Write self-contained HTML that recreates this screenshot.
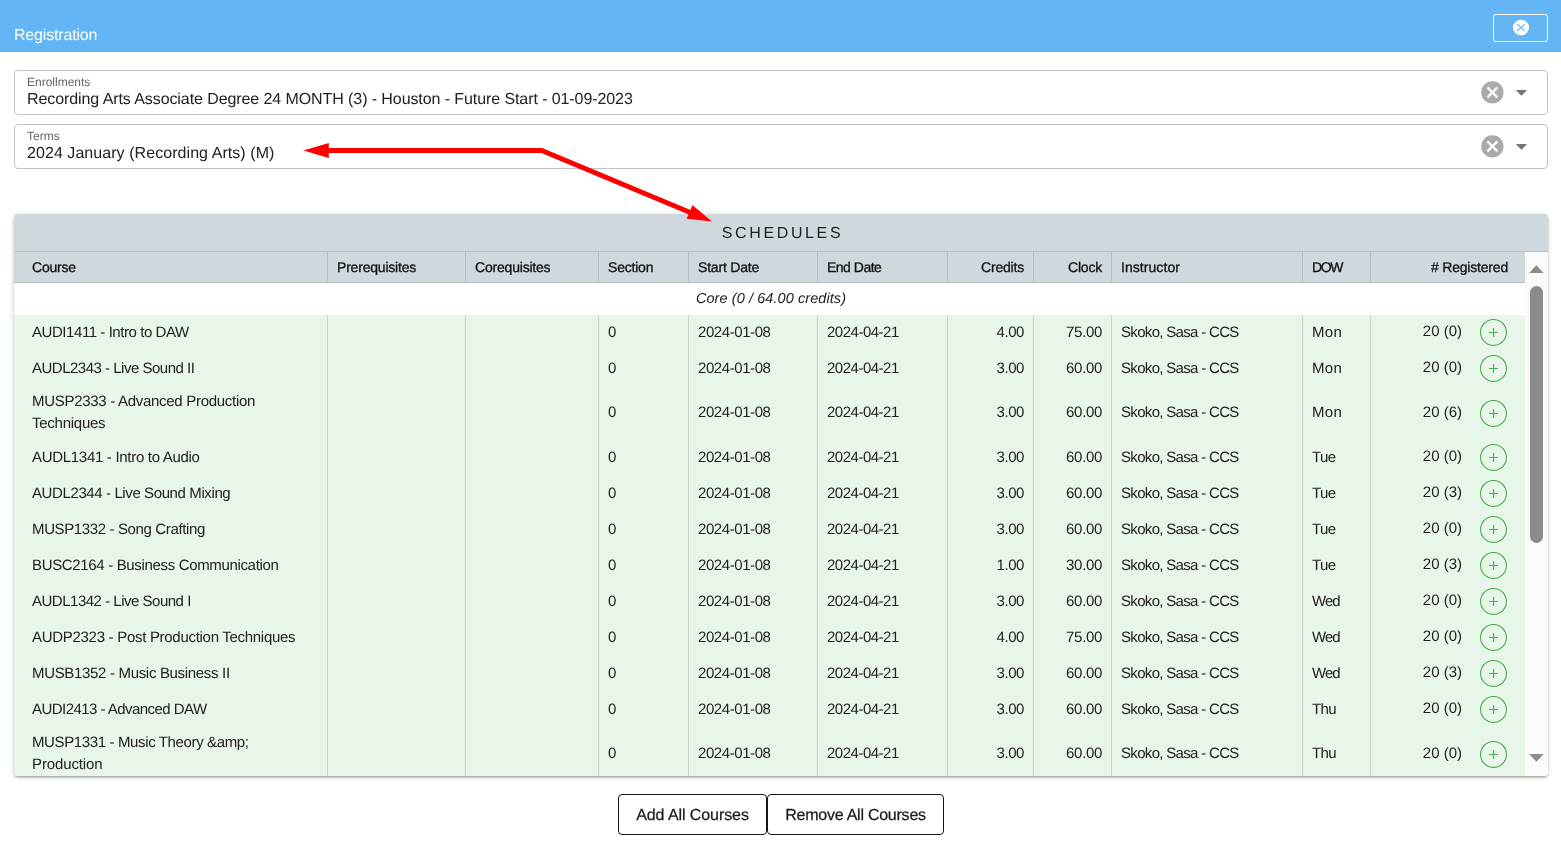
<!DOCTYPE html>
<html lang="en">
<head>
<meta charset="utf-8">
<title>Registration</title>
<style>
*{box-sizing:border-box;margin:0;padding:0}
html,body{width:1561px;height:844px;overflow:hidden;background:#fff}
body{font-family:"Liberation Sans",sans-serif;color:#212121;position:relative;-webkit-font-smoothing:antialiased;text-rendering:geometricPrecision}
#wrap{position:absolute;left:0;top:0;width:1561px;height:844px;will-change:transform}
.hdr{position:absolute;left:0;top:0;width:1561px;height:52px;background:#64b5f6}
.hdr .title{position:absolute;left:14px;top:27px;font-size:16px;line-height:18px;color:#fff;letter-spacing:-0.18px}
.hdr .close{position:absolute;left:1493px;top:14px;width:55px;height:28px;border:1px solid #fff;border-radius:3px}
.hdr .close svg{position:absolute;left:18px;top:4px}
.field{position:absolute;left:14px;width:1534px;height:45px;border:1px solid #c2c2c2;border-radius:4px;background:#fff}
.field .lbl{position:absolute;left:12px;top:4px;font-size:12px;line-height:14px;color:#666}
.field .val{position:absolute;left:12px;top:19.5px;font-size:16px;line-height:18px;color:#212121;white-space:nowrap}
.field svg.clr{position:absolute;left:1465px;top:9px}
.card{position:absolute;left:14px;top:214px;width:1534px;height:562px;border-radius:4px;background:#fff;box-shadow:0 1px 5px rgba(0,0,0,.2),0 2px 2px rgba(0,0,0,.14),0 3px 1px -2px rgba(0,0,0,.12);overflow:hidden}
.card .cap{position:absolute;left:0;top:0;width:1534px;height:38px;background:#cfd8dc;border-bottom:1px solid #b9c2c6;text-align:center;font-size:16px;line-height:37px;letter-spacing:2.62px;color:#212121;padding-top:1px;padding-left:3px}
table{position:absolute;left:0;top:38px;width:1511px;border-collapse:separate;border-spacing:0;table-layout:fixed;font-size:15px}
th{height:31px;background:#cfd8dc;font-weight:normal;text-align:left;padding:0 9px;border-left:1px solid #b5bec2;border-bottom:1px solid #b5bec2;font-size:14px;color:#111;white-space:nowrap;letter-spacing:-0.2px;-webkit-text-stroke:0.3px #111}
th:first-child,td:first-child{border-left:none;padding-left:18px}
td{height:36px;background:#e8f5e9;padding:0 9px;border-left:1px solid #c9d5cb;line-height:22px;color:#212121}
tr.tall td{height:53px;padding-bottom:1px}
tr.tall td.reg{padding-bottom:0}
tr.grp td{letter-spacing:0.08px;font-size:14.5px;height:32px;background:#fff;text-align:center;font-style:italic;border:none;padding:0 0 0 3px}
.r{text-align:right}
td.reg{padding-right:18px}
td.reg .w{display:flex;align-items:center;justify-content:flex-end;height:36px}
td.reg .n{position:relative;top:-1px}
td.reg svg{display:block;margin-left:18px;flex:none}
td.ins{letter-spacing:-0.68px}
td.sd{letter-spacing:-0.42px}
td.ed{letter-spacing:-0.49px}
td.cr{letter-spacing:-0.45px}
td.cl{letter-spacing:-0.33px}
td.dow{letter-spacing:0.3px}

.sb{position:absolute;left:1511px;top:38px;width:23px;height:524px;background:#fafafa}
.sb .thumb{position:absolute;left:5px;top:34px;width:13px;height:257px;background:#8b8b8b;border-radius:6.5px}
.btn{position:absolute;top:794px;height:41px;border:1px solid #151515;border-radius:4px;background:#fff;font-size:16px;line-height:39px;padding-top:1px;text-align:center;color:#1a1a1a;white-space:nowrap;-webkit-text-stroke:0.25px #1a1a1a}
svg.arrow{position:absolute;left:0;top:0;pointer-events:none}
</style>
</head>
<body>
<div id="wrap">
<div class="hdr">
  <div class="title">Registration</div>
  <div class="close"><svg width="18" height="18" viewBox="0 0 18 18"><ellipse cx="9" cy="8.55" rx="8.1" ry="7.75" fill="#fff"/><path d="M5.2 5.2 L12.8 11.9 M12.8 5.2 L5.2 11.9" stroke="#64b5f6" stroke-width="1.15" fill="none"/></svg></div>
</div>

<div class="field" style="top:70px">
  <div class="lbl">Enrollments</div>
  <div class="val" style="letter-spacing:-0.085px">Recording Arts Associate Degree 24 MONTH (3) - Houston - Future Start - 01-09-2023</div>
  <svg class="clr" width="60" height="26" viewBox="0 0 60 26"><circle cx="12.4" cy="12.4" r="11.1" fill="#aaa"/><path d="M7.4 7.4 L17.4 17.4 M17.4 7.4 L7.4 17.4" stroke="#fff" stroke-width="2.3" fill="none"/><path d="M35.7 10.1 L47.1 10.1 L41.4 15.8 Z" fill="#757575"/></svg>
</div>
<div class="field" style="top:124px">
  <div class="lbl">Terms</div>
  <div class="val" style="letter-spacing:0.06px">2024 January (Recording Arts) (M)</div>
  <svg class="clr" width="60" height="26" viewBox="0 0 60 26"><circle cx="12.4" cy="12.4" r="11.1" fill="#aaa"/><path d="M7.4 7.4 L17.4 17.4 M17.4 7.4 L7.4 17.4" stroke="#fff" stroke-width="2.3" fill="none"/><path d="M35.7 10.1 L47.1 10.1 L41.4 15.8 Z" fill="#757575"/></svg>
</div>

<div class="card">
  <div class="cap">SCHEDULES</div>
  <table>
    <colgroup><col style="width:313px"><col style="width:138px"><col style="width:133px"><col style="width:90px"><col style="width:129px"><col style="width:130px"><col style="width:86px"><col style="width:78px"><col style="width:191px"><col style="width:68px"><col style="width:155px"></colgroup>
    <tr><th>Course</th><th>Prerequisites</th><th>Corequisites</th><th>Section</th><th>Start Date</th><th style="letter-spacing:-0.5px">End Date</th><th class="r">Credits</th><th class="r">Clock</th><th style="letter-spacing:0.06px">Instructor</th><th style="letter-spacing:-1.4px">DOW</th><th class="r" style="padding-right:17px"># Registered</th></tr>
    <tr class="grp"><td colspan="11">Core (0 / 64.00 credits)</td></tr>
    <tr><td><span style="letter-spacing:-0.436px">AUDI1411 - Intro to DAW</span></td><td></td><td></td><td>0</td><td class="sd">2024-01-08</td><td class="ed">2024-04-21</td><td class="r cr">4.00</td><td class="r cl">75.00</td><td class="ins">Skoko, Sasa - CCS</td><td class="dow" style="letter-spacing:0.3px">Mon</td><td class="r reg"><div class="w"><span class="n">20 (0)</span><svg width="27" height="28" viewBox="0 0 27 28"><circle cx="13.5" cy="13.4" r="12.95" fill="none" stroke="#4caf50" stroke-width="1.1"/><path d="M9 13.5 H18 M13.55 9 V18" stroke="#4caf50" stroke-width="1.15" fill="none"/></svg></div></td></tr>
    <tr><td><span style="letter-spacing:-0.496px">AUDL2343 - Live Sound II</span></td><td></td><td></td><td>0</td><td class="sd">2024-01-08</td><td class="ed">2024-04-21</td><td class="r cr">3.00</td><td class="r cl">60.00</td><td class="ins">Skoko, Sasa - CCS</td><td class="dow" style="letter-spacing:0.3px">Mon</td><td class="r reg"><div class="w"><span class="n">20 (0)</span><svg width="27" height="28" viewBox="0 0 27 28"><circle cx="13.5" cy="13.4" r="12.95" fill="none" stroke="#4caf50" stroke-width="1.1"/><path d="M9 13.5 H18 M13.55 9 V18" stroke="#4caf50" stroke-width="1.15" fill="none"/></svg></div></td></tr>
    <tr class="tall"><td><span style="letter-spacing:-0.293px">MUSP2333 - Advanced Production</span><br><span style="letter-spacing:-0.256px">Techniques</span></td><td></td><td></td><td>0</td><td class="sd">2024-01-08</td><td class="ed">2024-04-21</td><td class="r cr">3.00</td><td class="r cl">60.00</td><td class="ins">Skoko, Sasa - CCS</td><td class="dow" style="letter-spacing:0.3px">Mon</td><td class="r reg"><div class="w"><span class="n">20 (6)</span><svg width="27" height="28" viewBox="0 0 27 28"><circle cx="13.5" cy="13.4" r="12.95" fill="none" stroke="#4caf50" stroke-width="1.1"/><path d="M9 13.5 H18 M13.55 9 V18" stroke="#4caf50" stroke-width="1.15" fill="none"/></svg></div></td></tr>
    <tr><td><span style="letter-spacing:-0.300px">AUDL1341 - Intro to Audio</span></td><td></td><td></td><td>0</td><td class="sd">2024-01-08</td><td class="ed">2024-04-21</td><td class="r cr">3.00</td><td class="r cl">60.00</td><td class="ins">Skoko, Sasa - CCS</td><td class="dow" style="letter-spacing:-0.6px">Tue</td><td class="r reg"><div class="w"><span class="n">20 (0)</span><svg width="27" height="28" viewBox="0 0 27 28"><circle cx="13.5" cy="13.4" r="12.95" fill="none" stroke="#4caf50" stroke-width="1.1"/><path d="M9 13.5 H18 M13.55 9 V18" stroke="#4caf50" stroke-width="1.15" fill="none"/></svg></div></td></tr>
    <tr><td><span style="letter-spacing:-0.393px">AUDL2344 - Live Sound Mixing</span></td><td></td><td></td><td>0</td><td class="sd">2024-01-08</td><td class="ed">2024-04-21</td><td class="r cr">3.00</td><td class="r cl">60.00</td><td class="ins">Skoko, Sasa - CCS</td><td class="dow" style="letter-spacing:-0.6px">Tue</td><td class="r reg"><div class="w"><span class="n">20 (3)</span><svg width="27" height="28" viewBox="0 0 27 28"><circle cx="13.5" cy="13.4" r="12.95" fill="none" stroke="#4caf50" stroke-width="1.1"/><path d="M9 13.5 H18 M13.55 9 V18" stroke="#4caf50" stroke-width="1.15" fill="none"/></svg></div></td></tr>
    <tr><td><span style="letter-spacing:-0.370px">MUSP1332 - Song Crafting</span></td><td></td><td></td><td>0</td><td class="sd">2024-01-08</td><td class="ed">2024-04-21</td><td class="r cr">3.00</td><td class="r cl">60.00</td><td class="ins">Skoko, Sasa - CCS</td><td class="dow" style="letter-spacing:-0.6px">Tue</td><td class="r reg"><div class="w"><span class="n">20 (0)</span><svg width="27" height="28" viewBox="0 0 27 28"><circle cx="13.5" cy="13.4" r="12.95" fill="none" stroke="#4caf50" stroke-width="1.1"/><path d="M9 13.5 H18 M13.55 9 V18" stroke="#4caf50" stroke-width="1.15" fill="none"/></svg></div></td></tr>
    <tr><td><span style="letter-spacing:-0.338px">BUSC2164 - Business Communication</span></td><td></td><td></td><td>0</td><td class="sd">2024-01-08</td><td class="ed">2024-04-21</td><td class="r cr">1.00</td><td class="r cl">30.00</td><td class="ins">Skoko, Sasa - CCS</td><td class="dow" style="letter-spacing:-0.6px">Tue</td><td class="r reg"><div class="w"><span class="n">20 (3)</span><svg width="27" height="28" viewBox="0 0 27 28"><circle cx="13.5" cy="13.4" r="12.95" fill="none" stroke="#4caf50" stroke-width="1.1"/><path d="M9 13.5 H18 M13.55 9 V18" stroke="#4caf50" stroke-width="1.15" fill="none"/></svg></div></td></tr>
    <tr><td><span style="letter-spacing:-0.491px">AUDL1342 - Live Sound I</span></td><td></td><td></td><td>0</td><td class="sd">2024-01-08</td><td class="ed">2024-04-21</td><td class="r cr">3.00</td><td class="r cl">60.00</td><td class="ins">Skoko, Sasa - CCS</td><td class="dow" style="letter-spacing:-0.95px">Wed</td><td class="r reg"><div class="w"><span class="n">20 (0)</span><svg width="27" height="28" viewBox="0 0 27 28"><circle cx="13.5" cy="13.4" r="12.95" fill="none" stroke="#4caf50" stroke-width="1.1"/><path d="M9 13.5 H18 M13.55 9 V18" stroke="#4caf50" stroke-width="1.15" fill="none"/></svg></div></td></tr>
    <tr><td><span style="letter-spacing:-0.292px">AUDP2323 - Post Production Techniques</span></td><td></td><td></td><td>0</td><td class="sd">2024-01-08</td><td class="ed">2024-04-21</td><td class="r cr">4.00</td><td class="r cl">75.00</td><td class="ins">Skoko, Sasa - CCS</td><td class="dow" style="letter-spacing:-0.95px">Wed</td><td class="r reg"><div class="w"><span class="n">20 (0)</span><svg width="27" height="28" viewBox="0 0 27 28"><circle cx="13.5" cy="13.4" r="12.95" fill="none" stroke="#4caf50" stroke-width="1.1"/><path d="M9 13.5 H18 M13.55 9 V18" stroke="#4caf50" stroke-width="1.15" fill="none"/></svg></div></td></tr>
    <tr><td><span style="letter-spacing:-0.322px">MUSB1352 - Music Business II</span></td><td></td><td></td><td>0</td><td class="sd">2024-01-08</td><td class="ed">2024-04-21</td><td class="r cr">3.00</td><td class="r cl">60.00</td><td class="ins">Skoko, Sasa - CCS</td><td class="dow" style="letter-spacing:-0.95px">Wed</td><td class="r reg"><div class="w"><span class="n">20 (3)</span><svg width="27" height="28" viewBox="0 0 27 28"><circle cx="13.5" cy="13.4" r="12.95" fill="none" stroke="#4caf50" stroke-width="1.1"/><path d="M9 13.5 H18 M13.55 9 V18" stroke="#4caf50" stroke-width="1.15" fill="none"/></svg></div></td></tr>
    <tr><td><span style="letter-spacing:-0.541px">AUDI2413 - Advanced DAW</span></td><td></td><td></td><td>0</td><td class="sd">2024-01-08</td><td class="ed">2024-04-21</td><td class="r cr">3.00</td><td class="r cl">60.00</td><td class="ins">Skoko, Sasa - CCS</td><td class="dow" style="letter-spacing:-0.6px">Thu</td><td class="r reg"><div class="w"><span class="n">20 (0)</span><svg width="27" height="28" viewBox="0 0 27 28"><circle cx="13.5" cy="13.4" r="12.95" fill="none" stroke="#4caf50" stroke-width="1.1"/><path d="M9 13.5 H18 M13.55 9 V18" stroke="#4caf50" stroke-width="1.15" fill="none"/></svg></div></td></tr>
    <tr class="tall"><td><span style="letter-spacing:-0.371px">MUSP1331 - Music Theory &amp;amp;</span><br><span style="letter-spacing:-0.122px">Production</span></td><td></td><td></td><td>0</td><td class="sd">2024-01-08</td><td class="ed">2024-04-21</td><td class="r cr">3.00</td><td class="r cl">60.00</td><td class="ins">Skoko, Sasa - CCS</td><td class="dow" style="letter-spacing:-0.6px">Thu</td><td class="r reg"><div class="w"><span class="n">20 (0)</span><svg width="27" height="28" viewBox="0 0 27 28"><circle cx="13.5" cy="13.4" r="12.95" fill="none" stroke="#4caf50" stroke-width="1.1"/><path d="M9 13.5 H18 M13.55 9 V18" stroke="#4caf50" stroke-width="1.15" fill="none"/></svg></div></td></tr>
  </table>
  <div class="sb"><svg width="23" height="524" viewBox="0 0 23 524" style="position:absolute;left:0;top:0"><path d="M4.1 21 L18.7 21 L11.4 13.2 Z" fill="#8b8b8b"/><path d="M4.1 502 L18.7 502 L11.4 509.8 Z" fill="#8b8b8b"/></svg><div class="thumb"></div></div>
</div>

<div class="btn" style="left:618px;width:149px;letter-spacing:-0.08px">Add All Courses</div>
<div class="btn" style="left:767px;width:177px;letter-spacing:-0.24px">Remove All Courses</div>

<svg class="arrow" width="1561" height="844" viewBox="0 0 1561 844"><g fill="#f00" stroke="none"><path d="M303.4 150.5 L328.8 142.9 L328.8 157.9 Z"/><path d="M712 221.6 L692.4 204.9 L686.7 218.8 Z"/></g><path d="M326 150.5 L541.7 150.5 L692 213.2" fill="none" stroke="#f00" stroke-width="4.9" stroke-linejoin="miter"/></svg>
</div>
</body>
</html>
